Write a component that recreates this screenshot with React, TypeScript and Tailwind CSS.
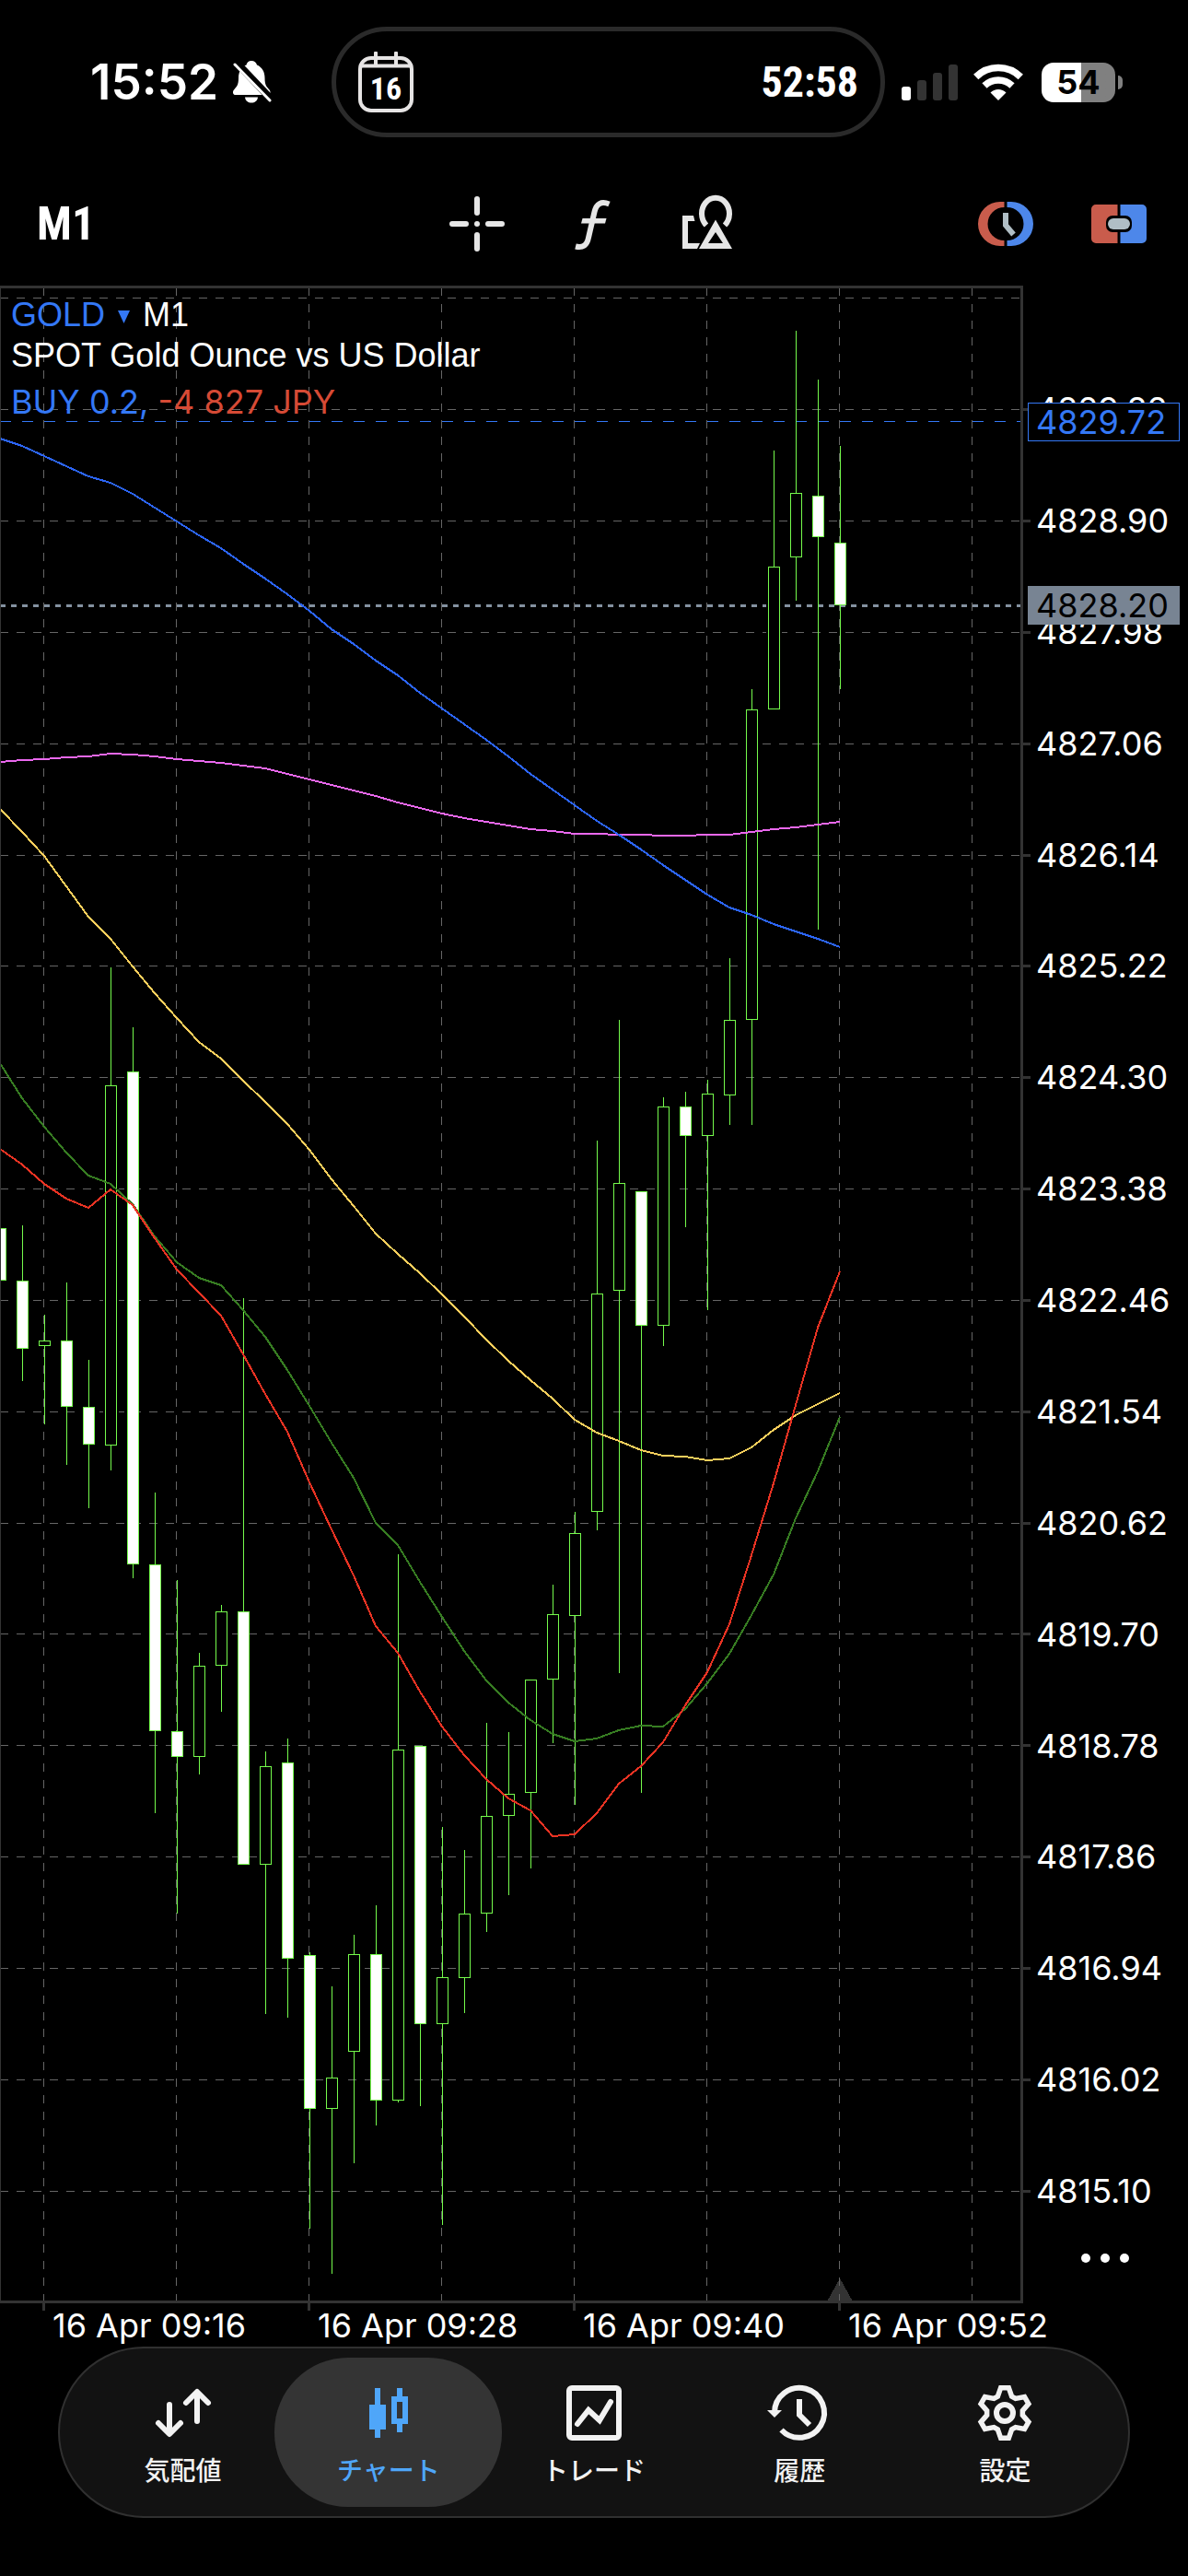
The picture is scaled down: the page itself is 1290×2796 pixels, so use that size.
import React from "react";

type Candle = {
  kind: "up" | "down";
  high: number;
  top: number;
  bottom: number;
  low: number;
};

const STEP = 24;

const d = (high: number, top: number, bottom: number, low: number): Candle => ({ kind: "down", high, top, bottom, low });
const u = (high: number, top: number, bottom: number, low: number): Candle => ({ kind: "up", high, top, bottom, low });

const candles: Candle[] = [
  d(1333, 1333, 1389, 1389),
  d(1330, 1390, 1463, 1498),
  u(1427, 1455, 1460, 1545),
  d(1392, 1455, 1526, 1589),
  d(1476, 1527, 1567, 1636),
  u(1050, 1178, 1568, 1595),
  d(1115, 1163, 1697, 1712),
  d(1620, 1698, 1878, 1967),
  d(1715, 1879, 1906, 2076),
  u(1794, 1808, 1906, 1925),
  u(1742, 1749, 1807, 1857),
  d(1409, 1749, 2023, 2023),
  u(1901, 1917, 2023, 2185),
  d(1887, 1913, 2125, 2189),
  d(2119, 2122, 2288, 2418),
  u(2156, 2255, 2288, 2467),
  u(2100, 2121, 2226, 2347),
  d(2068, 2121, 2279, 2306),
  u(1687, 1899, 2279, 2281),
  d(1895, 1895, 2196, 2285),
  u(1983, 2146, 2196, 2414),
  u(2008, 2077, 2146, 2184),
  u(1870, 1971, 2076, 2096),
  u(1880, 1947, 1970, 2056),
  u(1823, 1823, 1945, 2027),
  u(1720, 1752, 1822, 1891),
  u(1641, 1664, 1753, 1958),
  u(1238, 1404, 1640, 1660),
  u(1107, 1284, 1400, 1815),
  d(1293, 1293, 1438, 1945),
  u(1191, 1201, 1438, 1460),
  d(1185, 1201, 1232, 1331),
  u(1172, 1187, 1232, 1421),
  u(1040, 1107, 1188, 1220),
  u(748, 770, 1106, 1220),
  u(489, 615, 769, 769),
  u(359, 535, 604, 651),
  d(412, 538, 582, 1008),
  d(484, 589, 656, 747),
];

const averages = [
  {
    color: "#ea68ee",
    width: 2,
    values: [827, 825, 824, 822, 821, 818, 819, 821, 824, 826, 828, 831, 834, 840, 846, 852, 858, 864, 871, 877, 883, 888, 892, 896, 900, 902, 905, 905, 906, 906, 907, 907, 906, 906, 903, 900, 898, 895, 892],
  },
  {
    color: "#2c65f6",
    width: 2,
    values: [476, 484, 495, 506, 517, 524, 536, 551, 566, 581, 595, 612, 628, 645, 663, 683, 699, 717, 733, 752, 769, 786, 803, 821, 840, 857, 874, 891, 906, 922, 939, 955, 971, 985, 993, 1003, 1011, 1019, 1028],
  },
  {
    color: "#f8cf5c",
    width: 2,
    values: [878, 903, 929, 962, 995, 1019, 1049, 1078, 1105, 1131, 1149, 1173, 1196, 1220, 1248, 1280, 1309, 1339, 1361, 1382, 1405, 1429, 1454, 1477, 1498, 1518, 1541, 1555, 1564, 1574, 1580, 1581, 1585, 1583, 1571, 1552, 1536, 1524, 1512],
  },
  {
    color: "#377d22",
    width: 2,
    values: [1154, 1192, 1223, 1251, 1276, 1285, 1307, 1342, 1370, 1387, 1395, 1422, 1451, 1487, 1526, 1566, 1604, 1653, 1677, 1717, 1755, 1792, 1824, 1848, 1867, 1882, 1890, 1887, 1878, 1873, 1874, 1855, 1827, 1795, 1753, 1709, 1648, 1597, 1538],
  },
  {
    color: "#ea3323",
    width: 2,
    values: [1247, 1264, 1285, 1301, 1311, 1291, 1308, 1344, 1378, 1403, 1428, 1470, 1513, 1554, 1609, 1660, 1710, 1765, 1794, 1836, 1874, 1905, 1931, 1952, 1965, 1993, 1991, 1968, 1936, 1917, 1891, 1851, 1815, 1763, 1688, 1610, 1525, 1441, 1380],
  },
];

const rowLines = [323, 444, 565, 686, 807, 928, 1048, 1169, 1290, 1411, 1532, 1653, 1773, 1894, 2015, 2136, 2257, 2378];
const columnLines = [47, 191, 335, 479, 623, 767, 911, 1055];

const prices = [
  "4829.82", "4828.90", "4827.98", "4827.06", "4826.14", "4825.22", "4824.30", "4823.38", "4822.46",
  "4821.54", "4820.62", "4819.70", "4818.78", "4817.86", "4816.94", "4816.02", "4815.10",
];

const times = ["16 Apr 09:16", "16 Apr 09:28", "16 Apr 09:40", "16 Apr 09:52"];

function Chart() {
  return (
    <svg viewBox="0 310 1120 2198" className="block h-auto w-full" shapeRendering="crispEdges" role="img" aria-label="GOLD M1">
      <path d="M898 2498 L912 2473 L926 2498 Z" fill="#333333" />
      <g stroke="#666666" strokeWidth="1" strokeDasharray="9 9">
        {rowLines.map((y) => (
          <line key={y} x1="0" x2="1108" y1={y + 0.5} y2={y + 0.5} />
        ))}
        {columnLines.map((x) => (
          <line key={x} x1={x + 0.5} x2={x + 0.5} y1="312" y2="2497" />
        ))}
      </g>
      <line x1="0" x2="1108" y1="657.5" y2="657.5" stroke="#8491a0" strokeWidth="3" strokeDasharray="6 6" />
      <line x1="0" x2="1108" y1="457.5" y2="457.5" stroke="#3478f6" strokeWidth="1" strokeDasharray="12 12" />
      {candles.map((c, i) => {
        const x = i * STEP;
        return (
          <g key={i}>
            <rect x={x} y={c.high} width="1" height={c.low - c.high + 1} fill="#75fb4c" />
            {c.kind === "up" && <rect x={x - 8} y={c.top} width="17" height={c.bottom - c.top + 1} fill="#000000" />}
            <rect
              x={x - 5.5}
              y={c.top + 0.5}
              width="12"
              height={c.bottom - c.top}
              fill={c.kind === "up" ? "#000000" : "#ffffff"}
              stroke="#75fb4c"
              strokeWidth="1"
            />
          </g>
        );
      })}
      {averages.map((a) => (
        <polyline
          key={a.color}
          points={a.values.map((y, i) => `${i * STEP},${y}`).join(" ")}
          fill="none"
          stroke={a.color}
          strokeWidth={a.width}
        />
      ))}
      <g fill="#333333">
        <rect x="0" y="310" width="1111" height="3" />
        <rect x="0" y="310" width="1" height="2190" />
        <rect x="1108" y="310" width="3" height="2190" />
        <rect x="0" y="2497" width="1111" height="3" />
        {rowLines.slice(1).map((y) => (
          <rect key={y} x="1111" y={y - 1} width="8" height="3" />
        ))}
        {[47, 335, 623, 911].map((x) => (
          <rect key={x} x={x - 1} y="2500" width="3" height="8" />
        ))}
      </g>
    </svg>
  );
}

function BellOff() {
  return (
    <svg viewBox="0 0 42 46" className="h-[46px] w-[42px]" fill="#ffffff" aria-hidden="true">
      <path d="M20 0c3 0 5.500 2 6 4.500 6 2.500 8.500 8 8.500 14 0 8 2 9.500 5 13 2 2.500 1 5.500-2 5.500H3c-3 0-4-3-2-5.500 3-3.500 5-5 5-13 0-6 2.500-11.500 8.500-14C15 2 17 0 20 0z" />
      <path d="M13 39.500h14c-.5 4-3.500 6-7 6s-6.500-2-7-6z" />
      <path d="M3 1 L42 42" stroke="#000000" strokeWidth="8" />
      <path d="M2 4 L40 43" stroke="#ffffff" strokeWidth="3" strokeLinecap="round" />
    </svg>
  );
}

function StatusIcons() {
  return (
    <>
      <svg viewBox="0 0 62 40" className="h-[40px] w-[62px]" aria-label="Signal">
        <rect x="0" y="25" width="10" height="15" rx="3" fill="#ffffff" />
        <rect x="17" y="18" width="10" height="22" rx="3" fill="#333333" />
        <rect x="34" y="10" width="10" height="30" rx="3" fill="#333333" />
        <rect x="51" y="1" width="10" height="39" rx="3" fill="#333333" />
      </svg>
      <svg viewBox="0 0 54 40" className="ml-4 h-[40px] w-[54px]" aria-label="Wi-Fi">
        <g fill="none" stroke="#ffffff" strokeWidth="7.500">
          <path d="M2.700 14.500a34.500 34.500 0 0 1 48.600 0" />
          <path d="M12 24a21.500 21.500 0 0 1 30 0" />
        </g>
        <path d="M27 40 L18.500 31.500 a12 12 0 0 1 17 0z" fill="#ffffff" />
      </svg>
      <div className="relative ml-5 flex h-[43px] w-[80px] items-center justify-center rounded-[13px] bg-linear-to-r from-white from-54% to-[#808080] to-54% text-[36px] leading-none font-bold text-black">
        54
        <span className="absolute top-[14px] -right-2 h-[15px] w-[5px] rounded-r-full bg-[#808080]" />
      </div>
    </>
  );
}

function StatusBar() {
  return (
    <header className="flex items-center pt-[29px]">
      <div className="flex w-[360px] items-center gap-4 pl-[98px]">
        <time className="text-[53px] leading-none font-semibold">15:52</time>
        <BellOff />
      </div>
      <div className="flex h-[120px] flex-1 items-center justify-between rounded-full border-5 border-[#2a2a2a] px-6">
        <div className="relative flex h-[66px] w-[60px] items-end justify-center">
          <svg viewBox="0 0 60 66" className="absolute inset-0 h-[66px] w-[60px]" aria-hidden="true">
            <rect x="2" y="7" width="56" height="57" rx="12" fill="none" stroke="#e6e4e4" strokeWidth="4" />
            <path d="M3 15.500H57M19 1.500V15M41 1.500V15" stroke="#e6e4e4" strokeWidth="4" strokeLinecap="round" />
          </svg>
          <span className="pb-2 font-['Liberation_Sans_Narrow','Roboto_Condensed','Inter',sans-serif] text-[34px] leading-9 font-bold">16</span>
        </div>
        <time className="font-['Liberation_Sans_Narrow','Roboto_Condensed','Inter',sans-serif] text-[46px] leading-none font-bold">52:58</time>
      </div>
      <div className="flex w-[329px] items-center pl-[18px]">
        <StatusIcons />
      </div>
    </header>
  );
}

function ToolButton({ label, children }: { label: string; children: React.ReactNode }) {
  return (
    <button type="button" aria-label={label} className="size-[60px]">
      <svg viewBox="0 0 60 60" className="size-full overflow-visible" fill="none">
        {children}
      </svg>
    </button>
  );
}

function Toolbar() {
  return (
    <div className="flex items-center pt-[64px] pb-[37px]">
      <div className="flex-1 pl-10">
        <button type="button" className="font-['Liberation_Sans_Narrow','Roboto_Condensed','Inter',sans-serif] text-[50px] leading-none font-bold">
          M1
        </button>
      </div>
      <div className="flex items-center gap-[65px]">
        <ToolButton label="Crosshair">
          <path d="M30 3V18M30 42V57M3 30H18M42 30H57" stroke="#e6e6e6" strokeWidth="6" strokeLinecap="round" />
          <circle cx="30" cy="30" r="3" fill="#e6e6e6" />
        </ToolButton>
        <ToolButton label="Indicators">
          <path d="M48.500 8.500C40 5 34.500 8 32.500 17L26 45C24.500 53 20 56.500 12 54.500" stroke="#e6e6e6" strokeWidth="6" />
          <path d="M19.500 24H45.500L44 29.500H18z" fill="#e6e6e6" />
        </ToolButton>
        <ToolButton label="Objects">
          <path d="M29 31.500A15 17 0 1 1 49 31.500" stroke="#e6e6e6" strokeWidth="6" />
          <path d="M39 25.500L57 57H21zM39 39L31 51H47z" fill="#e6e6e6" fillRule="evenodd" />
          <path d="M3 21H15L16.500 27H9V51H22L19 57H3z" fill="#e6e6e6" />
        </ToolButton>
      </div>
      <div className="flex flex-1 items-center justify-end gap-[63px] pr-[45px]">
        <ToolButton label="Trade time">
          <path d="M28.500 6H24a24 24 0 0 0 0 48h4.500V48A18 18 0 0 1 28.500 12z" fill="#c95c4c" />
          <path d="M31.500 6H36a24 24 0 0 1 0 48h-4.500V48A18 18 0 0 0 31.500 12z" fill="#4d87ea" />
          <path d="M30 18V31.500L38.500 41.500" stroke="#b0bec5" strokeWidth="6" />
        </ToolButton>
        <ToolButton label="One click trading">
          <path d="M5 9H28.500V21H23a7 7 0 0 0-7 7v4a7 7 0 0 0 7 7h5.500V51H5a5 5 0 0 1-5-5V14a5 5 0 0 1 5-5z" fill="#c95c4c" />
          <path d="M55 9H31.500V21H37a7 7 0 0 1 7 7v4a7 7 0 0 1-7 7h-5.500V51H55a5 5 0 0 0 5-5V14a5 5 0 0 0-5-5z" fill="#4d87ea" />
          <rect x="18" y="24" width="24" height="12" rx="6" fill="#b0bec5" />
        </ToolButton>
      </div>
    </div>
  );
}

const gearPath =
  [0, 1, 2, 3, 4, 5]
    .flatMap((t) =>
      [
        [19.5, -23],
        [27.7, -9],
        [27.7, 9],
        [19.5, 23],
      ].map(([r, a]) => {
        const angle = ((t * 60 - 90 + a) * Math.PI) / 180;
        return `${(30 + r * Math.cos(angle)).toFixed(2)},${(30 + r * Math.sin(angle)).toFixed(2)}`;
      }),
    )
    .join(" ");

const tabs = [
  {
    label: "気配値",
    icon: (
      <g stroke="currentColor" strokeWidth="6" strokeLinecap="round" strokeLinejoin="round">
        <path d="M15 21V52M3 41L15 53L27 41" />
        <path d="M45 39V8M33 19L45 7L57 19" />
      </g>
    ),
  },
  {
    label: "チャート",
    active: true,
    icon: (
      <path
        d="M15 3h6v18h6v27h-6v9h-6v-9H9V21h6zM39 3h6v9h6v30h-6v9h-6v-9h-6V12h6zM39 18v18h6V18z"
        fill="currentColor"
        fillRule="evenodd"
      />
    ),
  },
  {
    label: "トレード",
    icon: (
      <g stroke="currentColor" strokeWidth="6">
        <rect x="3" y="3" width="54" height="54" rx="3" />
        <path d="M12 42L24 27L36 38L48 18" strokeLinecap="round" />
      </g>
    ),
  },
  {
    label: "履歴",
    icon: (
      <g stroke="currentColor" strokeWidth="6">
        <path d="M3 30A27 27 0 1 1 10.500 48.500" />
        <path d="M30 15V32L41 43" />
        <path d="M-5 27H11L3 35z" fill="currentColor" stroke="none" />
      </g>
    ),
  },
  {
    label: "設定",
    icon: (
      <g stroke="currentColor" strokeWidth="5.500">
        <polygon points={gearPath} />
        <circle cx="30" cy="30" r="9" strokeWidth="6" />
      </g>
    ),
  },
];

function TabBar() {
  return (
    <nav className="mx-[63px] mt-[7px] mb-[63px] flex rounded-full border-2 border-[#303030] bg-[#121212] px-[22px] py-[10px]">
      {tabs.map((tab) => (
        <div key={tab.label} className="flex flex-1">
          <button
            type="button"
            aria-current={tab.active ? "page" : undefined}
            className={
              tab.active
                ? "-mx-3 flex h-[162px] flex-1 flex-col items-center gap-[13px] rounded-[80px] bg-[#343434] pt-[30px] text-[#4fa6f9]"
                : "flex h-[162px] flex-1 flex-col items-center gap-[13px] pt-[30px] text-[#f2f2f2]"
            }
          >
            <svg viewBox="0 0 60 60" className="size-[60px] overflow-visible" fill="none" aria-hidden="true">
              {tab.icon}
            </svg>
            <span className="text-[28px] leading-10 font-medium">{tab.label}</span>
          </button>
        </div>
      ))}
    </nav>
  );
}

export default function App() {
  return (
    <main className="flex min-h-screen flex-col overflow-hidden bg-black font-['Inter','Noto_Sans_CJK_JP',sans-serif] text-white">
      <StatusBar />
      <Toolbar />
      <section className="flex">
        <div className="relative flex-1">
          <Chart />
          <div className="absolute top-[10px] left-3">
            <div className="flex items-center gap-[14px] font-['Liberation_Sans',sans-serif] text-[36px] leading-[44px]">
              <button type="button" className="flex items-center gap-[14px] text-[#3478f6]">
                GOLD
                <svg viewBox="0 0 13 14" className="mt-1 h-[14px] w-[13px]" fill="currentColor" aria-hidden="true">
                  <path d="M0 0H13L6.500 14z" />
                </svg>
              </button>
              <span>M1</span>
            </div>
            <div className="font-['Liberation_Sans',sans-serif] text-[36px] leading-[44px]">SPOT Gold Ounce vs US Dollar</div>
            <div className="mt-[6px] text-[36px] leading-[44px]">
              <span className="text-[#3478f6]">BUY 0.2,</span> <span className="text-[#d64a35]">-4 827 JPY</span>
            </div>
          </div>
        </div>
        <div className="relative flex w-[170px] flex-col justify-between pt-[113px] pb-[109px] text-[36px] leading-[42px]">
          {prices.map((p) => (
            <span key={p} className="pl-[5px]">
              {p}
            </span>
          ))}
          <span className="absolute top-[127px] -left-1 h-[42px] w-[165px] border border-[#3478f6] bg-black pl-2 leading-[40px] text-[#3478f6]">
            4829.72
          </span>
          <span className="absolute top-[326px] -left-1 h-[42px] w-[165px] bg-[#788493] pl-[9px] text-black">4828.20</span>
          <button type="button" aria-label="More" className="absolute bottom-[47px] left-[54px] flex h-5 items-center gap-[11px]">
            <span className="size-[10px] rounded-full bg-white" />
            <span className="size-[10px] rounded-full bg-white" />
            <span className="size-[10px] rounded-full bg-white" />
          </button>
        </div>
      </section>
      <div className="flex pl-[57px] text-[36px] leading-8">
        {times.map((t) => (
          <time key={t} className="w-72 shrink-0">
            {t}
          </time>
        ))}
      </div>
      <TabBar />
    </main>
  );
}
